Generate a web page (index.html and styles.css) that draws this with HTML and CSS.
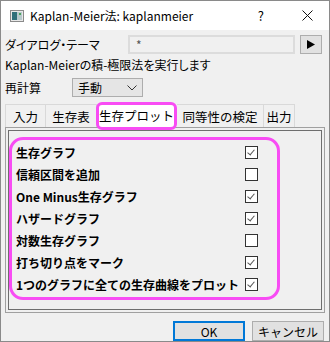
FILE: index.html
```html
<!DOCTYPE html>
<html lang="ja">
<head>
    <meta charset="UTF-8">
    <title>Kaplan-Meier法</title>
    <link rel="stylesheet" href="styles.css">
</head>
<body>

<div class="window">
    <div class="titlebar">
        <svg class="app-icon" width="14" height="12" viewBox="0 0 14 12">
            <rect x="0.5" y="0.5" width="13" height="11" fill="#e8e8e8" stroke="#8a8a8a"/>
            <rect x="2" y="2" width="5" height="8" fill="#2f6f7a"/>
            <rect x="7" y="2" width="5" height="8" fill="#b7c9cc"/>
            <rect x="9" y="3" width="2" height="2" fill="#4aa35a"/>
        </svg>
        <span class="title">Kaplan-Meier法: kaplanmeier</span>
        <span class="help">?</span>
        <svg class="close" width="11" height="11" viewBox="0 0 11 11">
            <path d="M0.5 0.5 L10.5 10.5 M10.5 0.5 L0.5 10.5" stroke="#111" stroke-width="1"/>
        </svg>
    </div>

    <div class="content">
        <div class="row theme-row">
            <span class="row-label theme-label">ダイアログ・テーマ</span>
            <div class="theme-input">*</div>
            <button type="button" class="arrow-btn">
                <svg width="8" height="9" viewBox="0 0 8 9"><path d="M0 0 L8 4.5 L0 9 Z" fill="#000"/></svg>
            </button>
        </div>

        <div class="desc">Kaplan-Meierの積-極限法を実行します</div>

        <div class="row recalc-row">
            <span class="row-label recalc-label">再計算</span>
            <div class="select">
                <span>手動</span>
                <svg width="10" height="6" viewBox="0 0 10 6"><path d="M0.5 0.5 L5 5 L9.5 0.5" fill="none" stroke="#333" stroke-width="1"/></svg>
            </div>
        </div>

        <div class="tabs">
            <div class="tab tab-input">入力</div>
            <div class="tab tab-table">生存表</div>
            <div class="tab tab-plot active">生存プロット</div>
            <div class="tab tab-test">同等性の検定</div>
            <div class="tab tab-output">出力</div>
        </div>

        <div class="panel">
            <div class="panel-inner">
                <div class="highlight">
                    <div class="option"><span>生存グラフ</span><span class="check on"></span></div>
                    <div class="option"><span>信頼区間を追加</span><span class="check"></span></div>
                    <div class="option"><span>One Minus生存グラフ</span><span class="check on"></span></div>
                    <div class="option"><span>ハザードグラフ</span><span class="check on"></span></div>
                    <div class="option"><span>対数生存グラフ</span><span class="check"></span></div>
                    <div class="option"><span>打ち切り点をマーク</span><span class="check on"></span></div>
                    <div class="option"><span>1つのグラフに全ての生存曲線をプロット</span><span class="check on"></span></div>
                </div>
            </div>
        </div>

        <div class="buttons">
            <button type="button" class="ok-btn">OK</button>
            <button type="button" class="cancel-btn">キャンセル</button>
        </div>
    </div>
</div>

</body>
</html>
```

FILE: styles.css
```css
body {
    margin: 0;
    font-family: "Noto Sans CJK JP", "Noto Sans", sans-serif;
    font-size: 12px;
    color: #000;
    background-color: #f0f0f0;
}

.window {
    width: 330px;
    height: 342px;
    box-sizing: border-box;
    border: 1px solid #8a8a8a;
    background-color: #f0f0f0;
    overflow: hidden;
}

.titlebar {
    height: 29px;
    background-color: #fff;
    display: flex;
    align-items: center;
    padding-left: 9px;
}

.app-icon {
    margin-right: 6px;
}

.title {
    font-size: 12px;
    flex: 1;
}

.help {
    font-size: 13px;
    margin-right: 38px;
}

.close {
    margin-right: 16px;
}

.content {
    padding: 0 4px;
}

.row {
    display: flex;
    align-items: center;
    height: 19px;
}

.theme-row {
    margin-top: 5px;
}

.row-label {
    font-feature-settings: "palt";
}

.theme-label {
    width: 123px;
}

.theme-input {
    width: 167px;
    height: 19px;
    box-sizing: border-box;
    border: 2px solid #dcdcdc;
    background-color: #f0f0f0;
    padding-left: 6px;
    line-height: 15px;
    color: #555;
}

.arrow-btn {
    margin-left: 5px;
    width: 22px;
    height: 19px;
    box-sizing: border-box;
    border: 1px solid #adadad;
    background-color: #e1e1e1;
    padding: 0;
    display: flex;
    align-items: center;
    justify-content: center;
}

.desc {
    height: 22px;
    line-height: 22px;
    font-feature-settings: "palt";
}

.recalc-row {
    margin-top: 2px;
}

.recalc-label {
    width: 67px;
}

.select {
    width: 71px;
    height: 19px;
    box-sizing: border-box;
    border: 1px solid #adadad;
    background-color: #e5e5e5;
    display: flex;
    align-items: center;
    justify-content: space-between;
    padding: 0 5px 0 5px;
}

.tabs {
    display: flex;
    margin-top: 7px;
    height: 23px;
    position: relative;
    z-index: 1;
}

.tab {
    box-sizing: border-box;
    height: 23px;
    border: 1px solid #d9d9d9;
    border-bottom: none;
    border-left: none;
    display: flex;
    align-items: center;
    justify-content: center;
    font-size: 12.5px;
}

.tab-input {
    width: 41px;
    border-left: 1px solid #d9d9d9;
}

.tab-table {
    width: 51px;
}

.tab-plot {
    width: 79px;
}

.tab-test {
    width: 87px;
}

.tab-output {
    width: 31px;
}

.tab.active {
    height: 28px;
    margin-top: -2px;
    margin-left: -1px;
    width: 81px;
    border: 3px solid #f84cf4;
    border-radius: 6px;
    background-color: #fff;
    padding-bottom: 2px;
}

.panel {
    width: 320px;
    height: 186px;
    box-sizing: border-box;
    border: 1px solid #a0a0a0;
    padding: 2px;
}

.panel-inner {
    height: 100%;
    box-sizing: border-box;
    border: 1px solid #6e6e6e;
    padding-top: 6px;
}

.highlight {
    width: 271px;
    height: 163px;
    box-sizing: border-box;
    border: 3px solid #f84cf4;
    border-radius: 14px;
    padding: 1px 19px 0 4px;
}

.option {
    height: 22px;
    display: flex;
    align-items: center;
    justify-content: space-between;
    font-weight: bold;
    font-size: 12px;
}

.check {
    width: 13px;
    height: 13px;
    box-sizing: border-box;
    border: 1px solid #333;
    background-color: #fff;
    position: relative;
}

.check.on::after {
    content: "";
    position: absolute;
    left: 3px;
    top: 1px;
    width: 3px;
    height: 6px;
    border-right: 1.5px solid #555;
    border-bottom: 1.5px solid #555;
    transform: rotate(40deg);
}

.buttons {
    display: flex;
    justify-content: flex-end;
    gap: 7px;
    margin-top: 8px;
    padding-right: 1px;
}

.buttons button {
    width: 72px;
    height: 20px;
    box-sizing: border-box;
    background-color: #e1e1e1;
    border: 1px solid #adadad;
    font-family: "Noto Sans CJK JP", sans-serif;
    font-size: 12px;
    padding: 0;
}

.buttons .ok-btn {
    border: 2px solid #0078d7;
}
```
